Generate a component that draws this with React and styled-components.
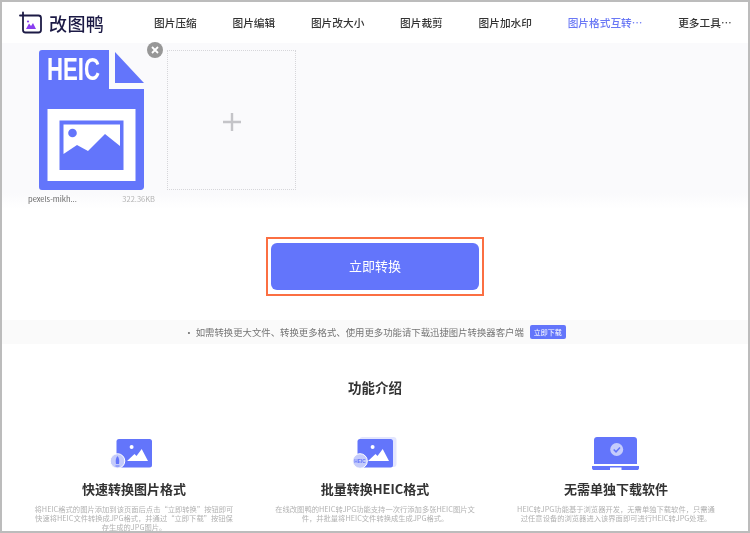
import React from "react";
import styled, { createGlobalStyle } from "styled-components";

const Global = createGlobalStyle`
  html, body { margin: 0; padding: 0; background: #fff; }
  body { font-family: "Noto Sans CJK SC", "Liberation Sans", sans-serif; }
  * { box-sizing: border-box; }
`;

const Frame = styled.div`
  width: 750px;
  height: 533px;
  border: 2px solid #bcbcbc;
  background: #fff;
  overflow: hidden;
`;

const Page = styled.div`
  filter: blur(0.35px);
`;

const Header = styled.header`
  height: 41px;
  display: flex;
  align-items: center;
  padding: 0 0 0 16px;
`;

const Logo = styled.div`
  display: flex;
  align-items: center;
  gap: 7px;
  width: 136px;
`;

const LogoText = styled.span`
  font-size: 18px;
  font-weight: 500;
  color: #1c1a45;
  letter-spacing: 0.4px;
  line-height: 1;
`;

const Nav = styled.nav`
  display: flex;
  gap: 35.7px;
`;

const NavItem = styled.a`
  font-size: 10.7px;
  font-weight: 500;
  line-height: 16px;
  white-space: nowrap;
  color: ${(p) => (p.$active ? "#6a78f5" : "#333")};
`;

const UploadBand = styled.section`
  height: 166px;
  padding: 7px 0 0 26px;
  background: linear-gradient(#fafafc 0, #fafafc 150px, #fff 166px);
  display: flex;
  gap: 12px;
`;

const FileCard = styled.div`
  position: relative;
  width: 127px;
`;

const Thumb = styled.div`
  display: flex;
  justify-content: center;
  height: 140px;
`;

const Close = styled.div`
  position: absolute;
  right: -8px;
  top: -8px;
  width: 16px;
  height: 16px;
  border-radius: 50%;
  background: #979797;
  display: flex;
  align-items: center;
  justify-content: center;
`;

const FileMeta = styled.div`
  display: flex;
  justify-content: space-between;
  margin-top: 3px;
  font-size: 7.5px;
  line-height: 11px;
  color: #666;
`;

const FileSize = styled.span`
  color: #b4b4b4;
`;

const AddBox = styled.div`
  width: 129px;
  height: 140px;
  padding-top: 4px;
  border: 1px dotted #d6d6da;
  display: flex;
  align-items: center;
  justify-content: center;
  color: #c4c4c8;
`;

const Action = styled.div`
  display: flex;
  justify-content: center;
  padding-top: 28px;
`;

const Outline = styled.div`
  border: 2px solid #fb6f42;
  padding: 4px 3px;
  width: 218px;
  height: 59px;
`;

const Convert = styled.button`
  display: block;
  width: 100%;
  height: 100%;
  padding: 0 0 2px;
  border: 0;
  border-radius: 6px;
  background: #6375fb;
  color: #fff;
  font: 400 13px "Noto Sans CJK SC", sans-serif;
`;

const Notice = styled.div`
  margin-top: 24px;
  height: 24px;
  background: #fafafa;
  display: flex;
  align-items: center;
  justify-content: center;
  gap: 6px;
  font-size: 9.4px;
  color: #757575;
`;

const NoticeText = styled.span`
  white-space: nowrap;
`;

const Badge = styled.span`
  width: 36px;
  height: 14px;
  border-radius: 2px;
  background: #6375fb;
  color: #fff;
  font-size: 7px;
  line-height: 14px;
  text-align: center;
  white-space: nowrap;
`;

const Title = styled.h2`
  margin: 33px 0 0;
  text-align: center;
  font-size: 13.5px;
  line-height: 20px;
  font-weight: 700;
  color: #333;
`;

const Features = styled.div`
  margin-top: 40px;
  display: grid;
  grid-template-columns: repeat(3, 241px);
  justify-content: center;
`;

const Feature = styled.article`
  display: flex;
  flex-direction: column;
  align-items: center;
`;

const IconWrap = styled.div`
  height: 36px;
  display: flex;
  align-items: flex-end;
  justify-content: center;
`;

const FeatureTitle = styled.h3`
  margin: 7px 0 0;
  font-size: 13px;
  line-height: 18px;
  font-weight: 700;
  color: #333;
  white-space: nowrap;
`;

const FeatureText = styled.p`
  margin: 7px 0 0;
  width: 200px;
  text-align: center;
  font-size: 7.3px;
  line-height: 9px;
  color: #b2b2b2;
`;

const LogoIcon = () => (
  <svg width="24" height="24" viewBox="0 0 24 24" fill="none">
    <path d="M5 1.500V19C5 20.500 6 21.500 7.500 21.500H20.500C22 21.500 23 20.500 23 19V7C23 5.500 22 4.500 20.500 4.500H2" stroke="#1c1a45" strokeWidth="1.800" strokeLinecap="round" />
    <path d="M8 18L11 12.500L13 15L15 12L18 18Z" fill="#8a3ff0" />
    <circle cx="10" cy="10.500" r="1.100" fill="#8a3ff0" />
  </svg>
);

const HeicFile = () => (
  <svg width="105" height="140" viewBox="0 0 105 140">
    <path d="M3 0H70V39H105V137C105 139 103 140 102 140H3C1 140 0 139 0 137V3C0 1 1 0 3 0Z" fill="#6375fb" />
    <path d="M76 2L105 33H76Z" fill="#6375fb" />
    <text x="8" y="30" fontFamily="'Liberation Sans', sans-serif" fontWeight="700" fontSize="31" fill="#fff" textLength="53" lengthAdjust="spacingAndGlyphs">HEIC</text>
    <rect x="8.500" y="59" width="88" height="72" fill="#fff" />
    <rect x="20.500" y="70.500" width="64" height="49.500" fill="#6375fb" />
    <path d="M24.500 74.500H81V96L66 84L49 101L38 95L24.500 104Z" fill="#fff" />
    <circle cx="33.500" cy="83" r="4.300" fill="#6375fb" />
  </svg>
);

const PictureIcon = ({ badge }) => (
  <svg width="50" height="36" viewBox="0 0 50 36">
    {badge === "heic" && <rect x="9.500" y="0" width="37" height="30" rx="3" fill="#e3e6fe" />}
    <rect x="7.500" y="2" width="35.500" height="28.500" rx="2.500" fill="#6375fb" />
    <circle cx="22.600" cy="10" r="2" fill="#fff" />
    <path d="M18 24L25.500 17L27.500 19L32.700 12L39 24Z" fill="#fff" />
    <circle cx={badge === "heic" ? 10 : 8.500} cy="24" r="7.300" fill="#c5ccfb" stroke="#fff" strokeWidth="1" />
    {badge === "rocket" ? (
      <path d="M8.500 19C10.500 21 10.500 24 10 27H7C6.500 24 6.500 21 8.500 19ZM6.500 28.500H10.500V29.500H6.500Z" fill="#6375fb" />
    ) : (
      <text x="10" y="26" textAnchor="middle" fontFamily="'Liberation Sans', sans-serif" fontWeight="700" fontSize="4.800" fill="#6375fb">HEIC</text>
    )}
  </svg>
);

const LaptopIcon = () => (
  <svg width="50" height="36" viewBox="0 0 50 36">
    <path d="M3 3C3 1.300 4.300 0 6 0H43C44.700 0 46 1.300 46 3V27H3Z" fill="#6375fb" />
    <path d="M1 29H48V31C48 32.500 47 33 46 33H3C2 33 1 32.500 1 31Z" fill="#6375fb" />
    <rect x="19" y="30.500" width="11.500" height="2.500" fill="#fff" />
    <circle cx="25.700" cy="12.500" r="6.500" fill="#c5ccfb" />
    <path d="M22.700 12.500L25 14.800L29 10.500" stroke="#6375fb" strokeWidth="1.500" fill="none" />
  </svg>
);

const navItems = ["图片压缩", "图片编辑", "图片改大小", "图片裁剪", "图片加水印", "图片格式互转…", "更多工具…"];

const features = [
  {
    icon: <PictureIcon badge="rocket" />,
    title: "快速转换图片格式",
    text: "将HEIC格式的图片添加到该页面后点击“立即转换”按钮即可快速将HEIC文件转换成JPG格式，并通过“立即下载”按钮保存生成的JPG图片。",
  },
  {
    icon: <PictureIcon badge="heic" />,
    title: "批量转换HEIC格式",
    text: "在线改图鸭的HEIC转JPG功能支持一次行添加多张HEIC图片文件，并批量将HEIC文件转换成生成JPG格式。",
  },
  {
    icon: <LaptopIcon />,
    title: "无需单独下载软件",
    text: "HEIC转JPG功能基于浏览器开发，无需单独下载软件，只需通过任意设备的浏览器进入该界面即可进行HEIC转JPG处理。",
  },
];

export default function App() {
  return (
    <>
      <Global />
      <Frame>
        <Page>
          <Header>
            <Logo>
              <LogoIcon />
              <LogoText>改图鸭</LogoText>
            </Logo>
            <Nav>
              {navItems.map((n, i) => (
                <NavItem key={n} $active={i === 5}>{n}</NavItem>
              ))}
            </Nav>
          </Header>
          <UploadBand>
            <FileCard>
              <Thumb><HeicFile /></Thumb>
              <Close>
                <svg width="8" height="8" viewBox="0 0 8 8">
                  <path d="M1 1L7 7M7 1L1 7" stroke="#fff" strokeWidth="1.800" />
                </svg>
              </Close>
              <FileMeta>
                <span>pexels-mikh...</span>
                <FileSize>322.36KB</FileSize>
              </FileMeta>
            </FileCard>
            <AddBox>
              <svg width="18" height="18" viewBox="0 0 18 18">
                <path d="M9 0V18M0 9H18" stroke="currentColor" strokeWidth="2.400" />
              </svg>
            </AddBox>
          </UploadBand>
          <Action>
            <Outline>
              <Convert>立即转换</Convert>
            </Outline>
          </Action>
          <Notice>
            <NoticeText>· 如需转换更大文件、转换更多格式、使用更多功能请下载迅捷图片转换器客户端</NoticeText>
            <Badge>立即下载</Badge>
          </Notice>
          <Title>功能介绍</Title>
          <Features>
            {features.map((f) => (
              <Feature key={f.title}>
                <IconWrap>{f.icon}</IconWrap>
                <FeatureTitle>{f.title}</FeatureTitle>
                <FeatureText>{f.text}</FeatureText>
              </Feature>
            ))}
          </Features>
        </Page>
      </Frame>
    </>
  );
}
